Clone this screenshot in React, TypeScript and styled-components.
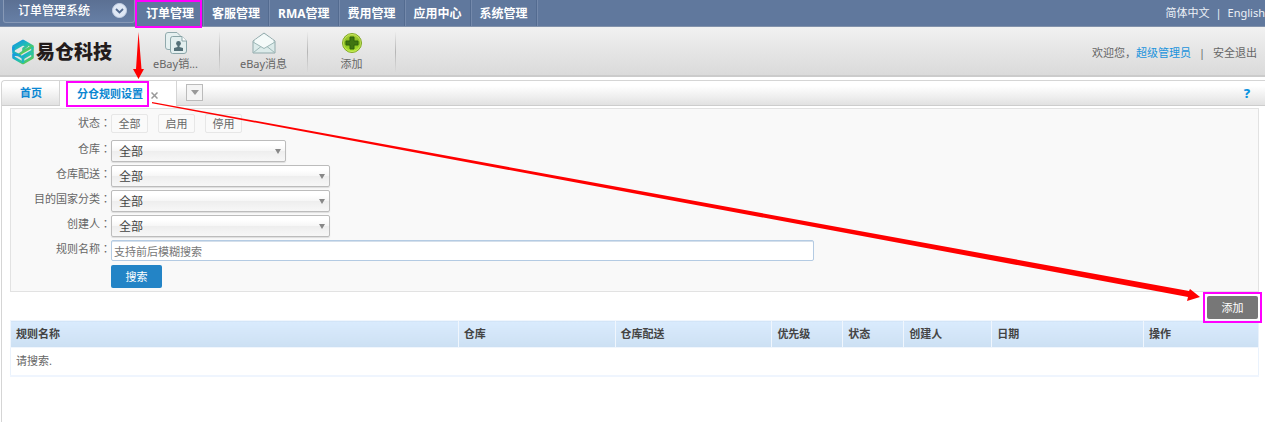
import React from "react";
import styled, { createGlobalStyle, css } from "styled-components";

const magenta = "#ff00ff";

const GlobalStyle = createGlobalStyle`
  * { box-sizing: border-box; }
  body {
    margin: 0;
    background: #fff;
    color: #666;
    font: 11px/16px "Noto Sans", "Noto Sans CJK SC", sans-serif;
  }
  button, input, select { font: inherit; color: inherit; margin: 0; }
  button { cursor: pointer; }
  a { color: inherit; text-decoration: none; }
`;

const Page = styled.div`
  position: relative;
  overflow: hidden;
  min-height: 100vh;
  display: flex;
  flex-direction: column;
`;

const frame = css<{ $left: number; $right: number; $top: number; $bottom: number }>`
  position: relative;
  &::after {
    content: "";
    position: absolute;
    left: ${(p) => -p.$left}px;
    right: ${(p) => -p.$right}px;
    top: ${(p) => -p.$top}px;
    bottom: ${(p) => -p.$bottom}px;
    border: 2px solid ${magenta};
    pointer-events: none;
    z-index: 2;
  }
`;

const Framed = styled.span<{ $left: number; $right: number; $top: number; $bottom: number }>`
  display: inline-block;
  ${frame}
`;

const TopBar = styled.header`
  display: flex;
  align-items: flex-start;
  height: 27px;
  padding-left: 3px;
  background: #60789d;
  border-bottom: 1px solid #8292ab;
  color: #fff;
`;

const SystemSwitch = styled.button`
  display: flex;
  align-items: center;
  justify-content: space-between;
  width: 132px;
  height: 23px;
  padding: 0 7px 1px 14px;
  border: 1px solid #8799b6;
  border-top: 0;
  border-radius: 0 0 3px 3px;
  background: linear-gradient(#5b7093, #667fa5);
  color: #fff;
  font-size: 12px;
  font-weight: 500;
`;

const MainNav = styled.nav`
  display: flex;
  padding-left: 3px;
`;

const NavLink = styled.a`
  height: 26px;
  padding: 0 9px 0 8px;
  border-right: 1px solid #7489ab;
  box-shadow: inset -1px 0 #536b90;
  font-size: 12px;
  font-weight: 700;
  line-height: 28px;
  white-space: nowrap;
`;

const Languages = styled.div`
  display: flex;
  gap: 6px;
  margin-left: auto;
  line-height: 25px;
  white-space: nowrap;
  color: #edf1f7;
`;

const ToolBar = styled.div`
  display: flex;
  align-items: center;
  height: 50px;
  padding-top: 2px;
  background: linear-gradient(#f1f1f1, #dadada);
  border-bottom: 2px solid #cbcbcb;
`;

const Logo = styled.a`
  display: flex;
  align-items: center;
  gap: 2px;
  width: 132px;
  padding-left: 12px;
  color: #231c1c;
  font-size: 19px;
  font-weight: 900;
  line-height: 24px;
  white-space: nowrap;
`;

const Shortcut = styled.button`
  display: flex;
  flex-direction: column;
  align-items: center;
  gap: 2px;
  width: 88px;
  height: 40px;
  padding: 0;
  border: 0;
  border-right: 1px solid;
  border-image: linear-gradient(transparent, #b5b5b5, transparent) 1;
  background: none;
  line-height: 16px;
`;

const Account = styled.div`
  display: flex;
  align-items: center;
  margin-left: auto;
  padding: 2px 8px 0 0;
  white-space: nowrap;
`;

const AccountName = styled.a`
  color: #1b93dc;
`;

const Divider = styled.span`
  margin: 0 8px;
`;

const Workspace = styled.main`
  flex: 1;
  margin: 3px 0 0 1px;
  border-left: 1px solid #d5d5d5;
  border-top: 1px solid #d5d5d5;
  border-top-left-radius: 4px;
`;

const TabBar = styled.div`
  display: flex;
  height: 25px;
  background: linear-gradient(#fff 20%, #e2e2e2);
  border-bottom: 1px solid #cdcdcd;
  border-top-left-radius: 4px;
`;

const Tab = styled.div<{ $active?: boolean }>`
  display: flex;
  align-items: center;
  gap: 8px;
  height: ${(p) => (p.$active ? 25 : 24)}px;
  padding: ${(p) => (p.$active ? "0 18px 0 17px" : "0 17px 0 18px")};
  border-right: 1px solid #d5d5d5;
  background: ${(p) => (p.$active ? "#fff" : "transparent")};
  color: #0b87d2;
  font-weight: 700;
  line-height: 18px;
  white-space: nowrap;
`;

const CloseTab = styled.button`
  display: flex;
  padding: 4px 0 0;
  border: 0;
  background: none;
`;

const TabMenu = styled.button`
  display: flex;
  align-items: center;
  justify-content: center;
  width: 17px;
  height: 17px;
  margin: 3px 0 0 9px;
  padding: 0;
  border: 1px solid #bbb;
  background: #f4f4f4;
`;

const Help = styled.a`
  margin-left: auto;
  padding-right: 15px;
  color: #0b93e0;
  font-size: 13px;
  font-weight: 800;
  line-height: 25px;
`;

const Content = styled.div`
  padding: 2px 6px 0 8px;
`;

const SearchForm = styled.form`
  display: flex;
  flex-direction: column;
  gap: 3px;
  padding: 5px 0 3px;
  border: 1px solid #e2e2e2;
  background: #f9f9f9;
`;

const Field = styled.div<{ $height?: number }>`
  display: flex;
  align-items: flex-start;
  min-height: ${(p) => p.$height ?? 22}px;
`;

const FieldLabel = styled.label`
  width: 100px;
  text-align: right;
  line-height: 17px;
  white-space: nowrap;
`;

const Colon = styled.span`
  font-family: "Noto Sans CJK TC", sans-serif;
`;

const Choices = styled.div`
  display: flex;
  gap: 10px;
`;

const Choice = styled.button`
  width: 37px;
  height: 19px;
  padding: 0;
  border: 1px solid #e7e7e7;
  border-radius: 2px;
  background: #fafafa;
  line-height: 17px;
`;

const SelectBox = styled.div<{ $width: number }>`
  position: relative;
  width: ${(p) => p.$width}px;
  &::after {
    content: "";
    position: absolute;
    right: 5px;
    top: 9px;
    border: 3px solid transparent;
    border-top: 5px solid #888;
    border-bottom: 0;
    pointer-events: none;
  }
`;

const Select = styled.select`
  appearance: none;
  display: block;
  width: 100%;
  height: 22px;
  padding: 2px 20px 0 7px;
  border: 1px solid #bcbcbc;
  border-radius: 2px;
  background: linear-gradient(#fff 20%, #f6f6f6 50%, #eee 52%, #f7f7f7);
  box-shadow: 0 1px 1px #ddd;
  color: #444;
  font-size: 12px;
  line-height: 18px;
`;

const TextInput = styled.input`
  width: 703px;
  max-width: calc(100% - 110px);
  height: 21px;
  padding: 1px 2px 0;
  border: 1px solid #b4cbe3;
  border-radius: 2px;
  background: #fff;
  box-shadow: inset 0 1px #d4dfeb;
  &::placeholder { color: #777; opacity: 1; }
`;

const ActionButton = styled.button<{ $color: string }>`
  display: block;
  width: 51px;
  height: 23px;
  padding: 0;
  border: 0;
  border-radius: 2px;
  background: ${(p) => p.$color};
  color: #fff;
  line-height: 23px;
`;

const SubmitRow = styled.div`
  padding-left: 100px;
`;

const TableActions = styled.div`
  display: flex;
  justify-content: flex-end;
  padding: 4px 1px 1px 0;
`;

const DataTable = styled.table`
  width: 100%;
  table-layout: fixed;
  border-collapse: collapse;
  border: 1px solid #eaf2fc;
`;

const HeadCell = styled.th`
  height: 27px;
  padding: 0 5px;
  border: 1px solid #f0f6fd;
  border-width: 1px 0 1px 1px;
  background: linear-gradient(#daebfd, #cce0f3);
  color: #444;
  font-weight: 700;
  text-align: left;
`;

const Cell = styled.td`
  height: 28px;
  padding: 0 5px;
  border-bottom: 2px solid #eff5fe;
`;

const Annotations = styled.svg`
  position: absolute;
  left: 0;
  top: 0;
  width: 100%;
  height: 422px;
  pointer-events: none;
  z-index: 3;
`;

const navItems = ["订单管理", "客服管理", "RMA管理", "费用管理", "应用中心", "系统管理"];

const selects = [
  { id: "warehouse", label: "仓库", width: 175 },
  { id: "delivery", label: "仓库配送", width: 219 },
  { id: "country", label: "目的国家分类", width: 219 },
  { id: "creator", label: "创建人", width: 219 },
];

const columns = [
  { name: "规则名称", width: 448 },
  { name: "仓库", width: 157 },
  { name: "仓库配送", width: 157 },
  { name: "优先级", width: 71 },
  { name: "状态", width: 61 },
  { name: "创建人", width: 88 },
  { name: "日期", width: 152 },
  { name: "操作", width: 115 },
];
const totalWidth = columns.reduce((sum, c) => sum + c.width, 0);

const LogoMark = () => (
  <svg width="22" height="26" viewBox="0 0 22 26" aria-hidden="true">
    <defs>
      <linearGradient id="mark" x1="0" y1="0" x2="1" y2="1">
        <stop offset="0.1" stopColor="#1698df" />
        <stop offset="0.5" stopColor="#20bfb4" />
        <stop offset="0.9" stopColor="#67cc3e" />
      </linearGradient>
    </defs>
    <g fill="none" stroke="url(#mark)" strokeWidth="2.600" strokeLinejoin="round">
      <path d="M1.500 7.500L11 2L20.500 7.500L11.500 12.500V9.500L15 7L11 5L1.500 10.500Z" />
      <path d="M1.500 8V13.500L6.500 16L11.500 12.500" />
      <path d="M20.500 18.500L11 24L1.500 18.500V15.500L6.500 16L11 19L20.500 13.500Z" />
      <path d="M20.500 8V12L11 17.500V24" />
    </g>
  </svg>
);

const ContactsIcon = () => (
  <svg width="22" height="22" viewBox="0 0 22 22" aria-hidden="true">
    <path d="M3 0.500H12L15 3.500V17.500H3Q0.500 17.500 0.500 15V3Q0.500 0.500 3 0.500Z" fill="#e5f0f0" stroke="#91aaad" />
    <path d="M7.500 4.500H17L21.500 9V19Q21.500 21.500 19 21.500H7.500Q5.500 21.500 5.500 19V7Q5.500 4.500 7.500 4.500Z" fill="#e3efef" stroke="#8aa5a8" />
    <path d="M17 4.500V9H21.500" fill="#fff" stroke="#8aa5a8" />
    <circle cx="13.500" cy="11.500" r="2.400" fill="#547078" />
    <path d="M12.500 12.500H14.500V15L18 16V19H9V16L12.500 15Z" fill="#547078" />
  </svg>
);

const MailIcon = () => (
  <svg width="24" height="22" viewBox="0 0 24 22" aria-hidden="true">
    <path d="M1 9L12 1L23 9V21H1Z" fill="#dcebea" stroke="#91a9ab" strokeLinejoin="round" />
    <path d="M3 8L12 2L21 8V11L12 16L3 11Z" fill="#f4faf9" />
    <path d="M1 10L12 16.500L23 10M1.500 20.500L9 14.500M22.500 20.500L15 14.500" fill="none" stroke="#9db7b7" />
  </svg>
);

const AddIcon = () => (
  <svg width="22" height="22" viewBox="0 0 22 22" aria-hidden="true">
    <defs>
      <linearGradient id="add" x1="0" y1="0" x2="0" y2="1">
        <stop offset="0" stopColor="#b2d43a" />
        <stop offset="0.5" stopColor="#80b81c" />
        <stop offset="1" stopColor="#b6ee32" />
      </linearGradient>
    </defs>
    <circle cx="11" cy="11" r="9.500" fill="url(#add)" stroke="#82a826" />
    <circle cx="11" cy="11" r="8.500" fill="none" stroke="#d3ec72" opacity="0.7" />
    <path d="M9 5H13V9H17V13H13V17H9V13H5V9H9Z" fill="#3f7411" stroke="#2f620c" strokeLinejoin="round" />
  </svg>
);

export default function App() {
  return (
    <Page>
      <GlobalStyle />
      <TopBar>
        <SystemSwitch type="button">
          订单管理系统
          <svg width="15" height="15" viewBox="0 0 15 15" aria-hidden="true">
            <circle cx="7.500" cy="7.500" r="7" fill="#dfe8f5" stroke="#c3d0e4" />
            <path d="M4 6L7.500 9.500L11 6" fill="none" stroke="#536b90" strokeWidth="1.800" />
          </svg>
        </SystemSwitch>
        <MainNav>
          {navItems.map((item, i) => (
            <NavLink href="#" key={item}>
              {i === 0 ? <Framed $left={11} $right={8} $top={0} $bottom={0}>{item}</Framed> : item}
            </NavLink>
          ))}
        </MainNav>
        <Languages>
          <a href="#">简体中文</a>
          <span>|</span>
          <a href="#">English</a>
        </Languages>
      </TopBar>

      <ToolBar>
        <Logo href="#">
          <LogoMark />
          易仓科技
        </Logo>
        <Shortcut type="button"><ContactsIcon />eBay销...</Shortcut>
        <Shortcut type="button"><MailIcon />eBay消息</Shortcut>
        <Shortcut type="button"><AddIcon />添加</Shortcut>
        <Account>
          欢迎您，<AccountName href="#">超级管理员</AccountName>
          <Divider>|</Divider>
          <a href="#">安全退出</a>
        </Account>
      </ToolBar>

      <Workspace>
        <TabBar>
          <Tab><a href="#">首页</a></Tab>
          <Tab $active>
            <Framed as="a" href="#" $left={11} $right={6} $top={4} $bottom={4}>分仓规则设置</Framed>
            <CloseTab type="button" aria-label="关闭">
              <svg width="7" height="7" viewBox="0 0 7 7" aria-hidden="true">
                <path d="M0.500 0.500L6.500 6.500M6.500 0.500L0.500 6.500" stroke="#999" strokeWidth="1.500" />
              </svg>
            </CloseTab>
          </Tab>
          <TabMenu type="button" aria-label="更多">
            <svg width="8" height="5" viewBox="0 0 8 5" aria-hidden="true">
              <path d="M0 0H8L4 5Z" fill="#999" />
            </svg>
          </TabMenu>
          <Help href="#">?</Help>
        </TabBar>

        <Content>
          <SearchForm onSubmit={(e) => e.preventDefault()}>
            <Field $height={23}>
              <FieldLabel as="span" id="status">状态<Colon>：</Colon></FieldLabel>
              <Choices role="group" aria-labelledby="status">
                <Choice type="button">全部</Choice>
                <Choice type="button">启用</Choice>
                <Choice type="button">停用</Choice>
              </Choices>
            </Field>
            {selects.map((s) => (
              <Field key={s.id}>
                <FieldLabel htmlFor={s.id}>{s.label}<Colon>：</Colon></FieldLabel>
                <SelectBox $width={s.width}>
                  <Select id={s.id}><option>全部</option></Select>
                </SelectBox>
              </Field>
            ))}
            <Field>
              <FieldLabel htmlFor="rule">规则名称<Colon>：</Colon></FieldLabel>
              <TextInput id="rule" type="text" placeholder="支持前后模糊搜索" />
            </Field>
            <SubmitRow>
              <ActionButton $color="#2384c6">搜索</ActionButton>
            </SubmitRow>
          </SearchForm>

          <TableActions>
            <Framed $left={4} $right={4} $top={4} $bottom={4}>
              <ActionButton type="button" $color="#777">添加</ActionButton>
            </Framed>
          </TableActions>

          <DataTable>
            <colgroup>
              {columns.map((c) => (
                <col key={c.name} style={{ width: `${(c.width / totalWidth) * 100}%` }} />
              ))}
            </colgroup>
            <thead>
              <tr>{columns.map((c) => <HeadCell key={c.name}>{c.name}</HeadCell>)}</tr>
            </thead>
            <tbody>
              <tr><Cell colSpan={columns.length}>请搜索.</Cell></tr>
            </tbody>
          </DataTable>
        </Content>
      </Workspace>

      <Annotations viewBox="0 0 1265 422" preserveAspectRatio="none" aria-hidden="true">
        <path d="M138.500 32L141.500 69H144L138.500 79L133 69H136Z" fill="#f00" />
        <path d="M152 102L1189 291L1190 289L1200 297L1187 301L1188 297L152 103.200Z" fill="#f00" />
      </Annotations>
    </Page>
  );
}
